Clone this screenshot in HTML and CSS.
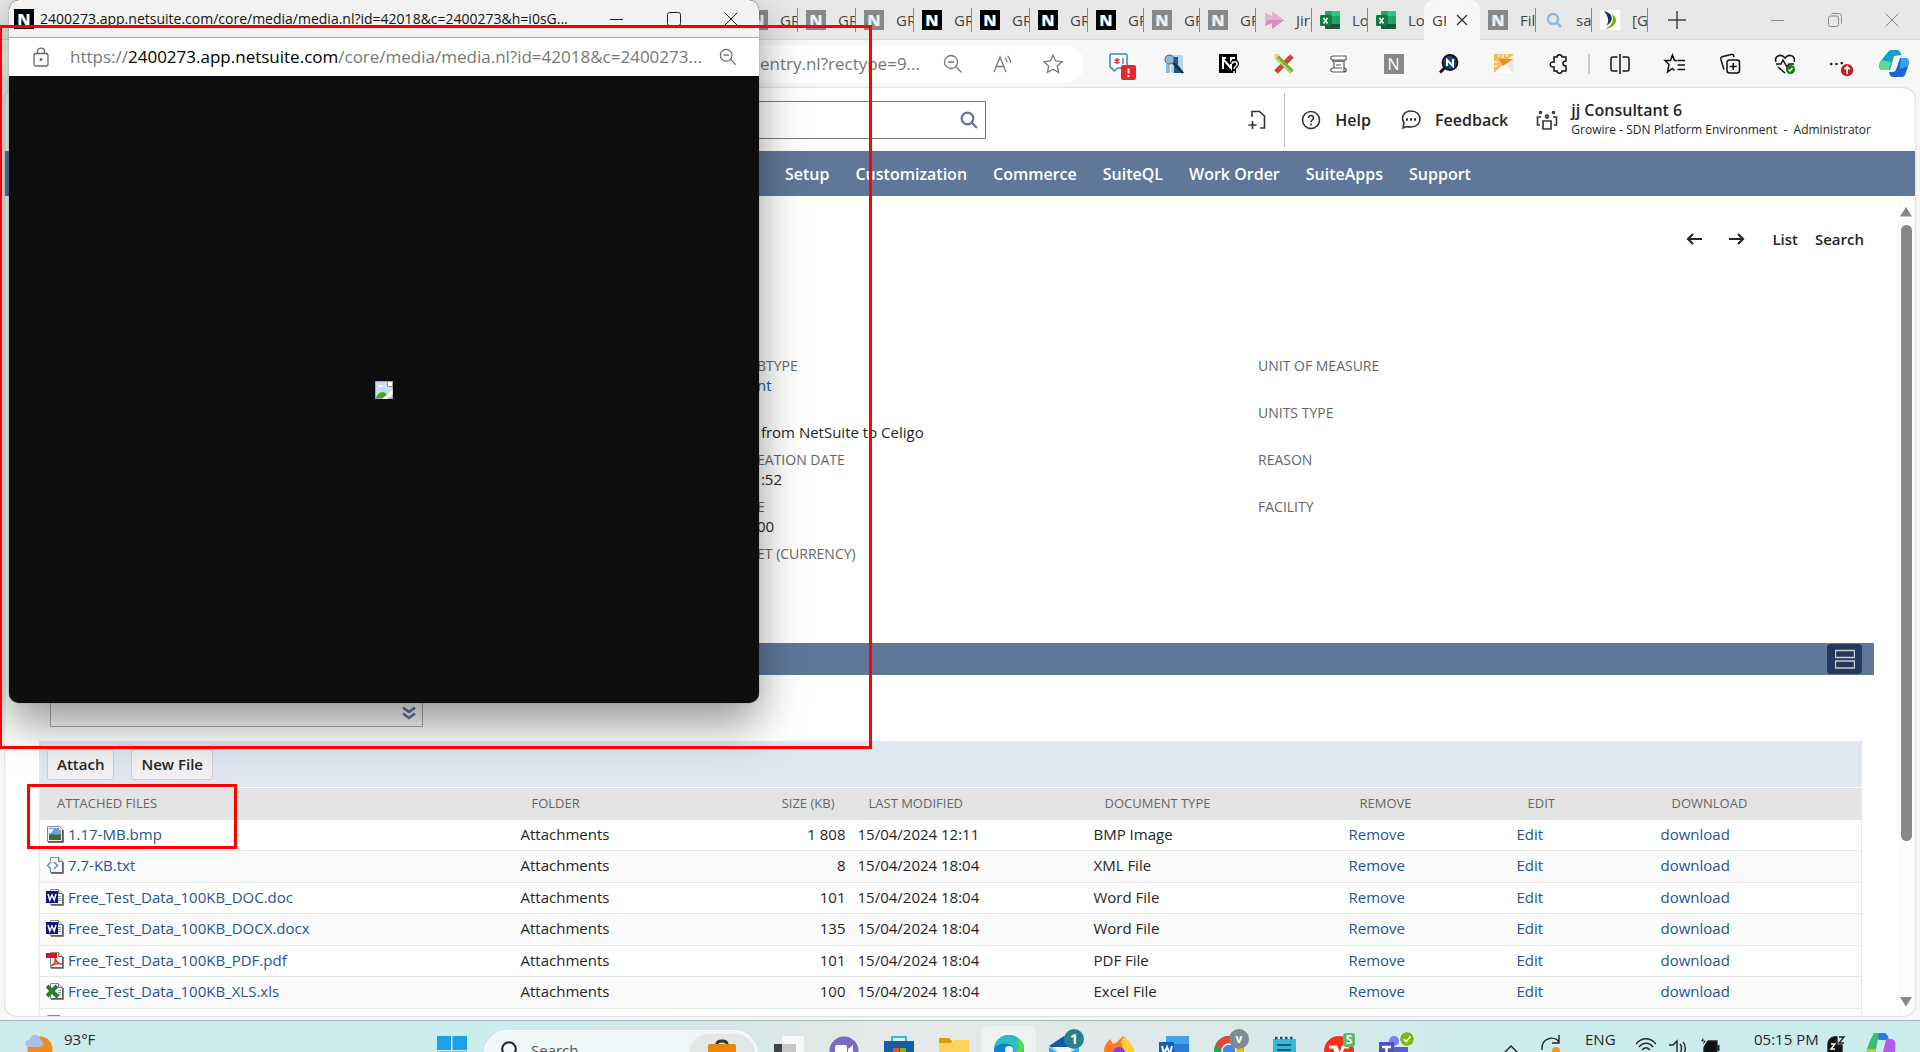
FILE: index.html
```html
<!DOCTYPE html>
<html lang="en">
<head>
<meta charset="utf-8">
<title>NetSuite record - attached files</title>
<link rel="stylesheet" href="styles.css">
</head>
<body>
<svg class="defs" aria-hidden="true">
  <defs>
    <symbol id="zoom-out" viewBox="0 0 20 20"><circle cx="8" cy="8" r="6.5"/><path d="M12.800 12.800 18.500 18.500M5 8h6"/></symbol>
    <symbol id="excel" viewBox="0 0 20 20"><path fill="#21a366" d="M6 1h13a1 1 0 0 1 1 1v16a1 1 0 0 1-1 1H6a1 1 0 0 1-1-1V2a1 1 0 0 1 1-1z"/><path fill="#107c41" d="M5 6h7v9H5z"/><path fill="#185c37" d="M5 14h15v4a1 1 0 0 1-1 1H6a1 1 0 0 1-1-1z"/><path fill="#33c481" d="M12 1h7a1 1 0 0 1 1 1v4h-8z"/><rect x="0" y="5" width="11" height="11" rx="1" fill="#107c41"/><path stroke="#fff" stroke-width="1.600" d="M3.500 8 7.500 13.500M7.500 8 3.500 13.500"/></symbol>
    <symbol id="page" viewBox="0 0 18 18"><path fill="#f4f4f4" stroke="#8a8a8a" d="M4.500 1.500h8l4 4v11h-12z"/><path fill="#ddd" stroke="#777" d="M12.500 1.500v4h4"/><path stroke="#555" stroke-width="1.500" d="M5 17h12V6"/></symbol>
    <symbol id="word" viewBox="0 0 18 18"><use href="#page"/><path stroke="#999" d="M12 8.500h3M12 10.500h3M12 12.500h3"/><rect x="0" y="3" width="12" height="12" fill="#10128c"/><path fill="none" stroke="#fff" stroke-width="1.500" d="M2 6l1.800 6L6 7l2.200 5L10 6"/></symbol>
    <symbol id="photo" viewBox="0 0 18 18"><path fill="#e8eef6" stroke="#888" d="M1.500 1.500h12l3 3v12h-15z"/><path fill="#6f9fd6" d="M3 3h10v2h2v5H3z"/><path fill="#e8f1fb" d="M3 4h5l-3 4H3z"/><path fill="#3c6e35" d="M3 10l4-1 3 1 5-1v6H3z"/><path stroke="#444" stroke-width="1.500" d="M2 17h15V5"/></symbol>
  </defs>
</svg>

<div class="browser">
  <header class="tabstrip">
    <div class="tabs tabs-wide">
      <div class="tab"><span class="fav n dim">N</span><span class="tab-name">GR</span></div>
      <div class="tab"><span class="fav n dim">N</span><span class="tab-name">GR</span></div>
      <div class="tab"><span class="fav n dim">N</span><span class="tab-name">GR</span></div>
      <div class="tab"><span class="fav n">N</span><span class="tab-name">GR</span></div>
      <div class="tab"><span class="fav n">N</span><span class="tab-name">GR</span></div>
      <div class="tab"><span class="fav n">N</span><span class="tab-name">GR</span></div>
    </div>
    <div class="tabs">
      <div class="tab"><span class="fav n">N</span><span class="tab-name">GR</span></div>
      <div class="tab"><span class="fav n dim">N</span><span class="tab-name">GR</span></div>
      <div class="tab"><span class="fav n dim">N</span><span class="tab-name">GR</span></div>
      <div class="tab"><svg class="fav" viewBox="0 0 20 20"><path fill="#eab0d2" d="M1 3l7 3V1l12 9-12 9v-6l-7 3z"/><path fill="#d68fbd" d="M3 10h17L8 19v-6l-7 3z"/></svg><span class="tab-name">Jira</span></div>
      <div class="tab"><svg class="fav"><use href="#excel"/></svg><span class="tab-name">Log</span></div>
      <div class="tab last"><svg class="fav"><use href="#excel"/></svg><span class="tab-name">Log</span></div>
      <div class="tab active"><span class="tab-name">GR</span><button class="tab-close" aria-label="Close tab"><svg viewBox="0 0 12 12"><path d="M1 1l10 10M11 1 1 11"/></svg></button></div>
      <div class="tab"><span class="fav n dim">N</span><span class="tab-name">File</span></div>
      <div class="tab"><svg class="fav" viewBox="0 0 20 20" fill="none" stroke="#8fb9e0" stroke-width="2.500"><circle cx="9" cy="9" r="5"/><path d="M12.500 12.500 17 17"/></svg><span class="tab-name">sa</span></div>
      <div class="tab"><svg class="fav" viewBox="0 0 20 20"><path fill="#fff" d="M0 0h20v20H0z"/><path fill="#12394d" d="M4 1c9 2 11 10 2 15 4-5 2-10-2-15z"/><path fill="#7ea800" d="M12 4c8 6 3 14-7 15 8-4 9-9 7-15z"/></svg><span class="tab-name">[GR</span></div>
    </div>
    <button class="new-tab" aria-label="New tab"><svg viewBox="0 0 18 18"><path d="M9 0v18M0 9h18"/></svg></button>
    <div class="win-buttons">
      <button aria-label="Minimize"><svg viewBox="0 0 14 14"><path d="M0 7.500h13"/></svg></button>
      <button aria-label="Restore"><svg viewBox="0 0 14 14"><rect x=".5" y="3" width="10" height="10.500" rx="2"/><path d="M3.500 .5h7a3 3 0 0 1 3 3v7"/></svg></button>
      <button aria-label="Close"><svg viewBox="0 0 14 14"><path d="M.5 .5l13 13M13.500 .5l-13 13"/></svg></button>
    </div>
  </header>

  <div class="toolbar">
    <div class="omnibox">
      <span class="address">dentry.nl?rectype=9...</span>
      <button aria-label="Zoom out"><svg class="line"><use href="#zoom-out"/></svg></button>
      <button aria-label="Read aloud"><svg class="line" viewBox="0 0 20 20"><path d="M1 18 7 3l6 15M3.500 12.500h7M12 4c1.500 1 2 2.500 2 4M14.500 2c2.500 2 3 4 3 7"/></svg></button>
      <button aria-label="Favourite"><svg class="line" viewBox="0 0 20 20"><path d="M10 1l2.700 6 6.300.700-4.700 4.300 1.300 6.500-5.600-3.200-5.600 3.200 1.300-6.500L1 7.700 7.300 7z"/></svg></button>
    </div>
    <div class="extensions">
      <button aria-label="Comments"><svg viewBox="0 0 28 28"><path fill="#fff" stroke="#3b82c4" stroke-width="1.500" d="M2 1h15a1 1 0 0 1 1 1v13H9l-4 3-2-3H2a1 1 0 0 1-1-1V2a1 1 0 0 1 1-1z"/><path stroke="#d22" stroke-width="1.400" d="M8 5v6M5.500 6.500l5 3M10.500 6.500l-5 3"/><path stroke="#3b82c4" stroke-width="1.400" d="M14 5v6"/><rect x="12" y="12" width="15" height="15" rx="2" fill="#e8262b"/><path stroke="#fff" stroke-width="2" d="M19.500 15.500v5M19.500 22v2"/></svg></button>
      <button aria-label="Record search"><svg viewBox="0 0 20 20"><path fill="#b8d3e8" d="M7 1h12v18H7z"/><path fill="#17598c" d="M10 3h4v8l6 8H10z"/><path fill="#8db9da" d="M2 10h4v9H2z"/><circle cx="5.500" cy="5.500" r="4.500" fill="#8db9da" stroke="#556" /><path stroke="#223" stroke-width="2" d="M9 9l10 10"/></svg></button>
      <button aria-label="Field help"><svg viewBox="0 0 20 20"><path fill="#000" d="M0 0h18v14h-4v5H0z"/><path stroke="#fff" stroke-width="2" fill="none" d="M4 15V5l8 9V4M3 4h4M11 4h5"/><path stroke="#000" stroke-width="4" fill="none" d="M13 10c0-3 5-3 5 0s-3 2-3 5v4"/><path stroke="#fff" stroke-width="1.500" fill="none" d="M13 10c0-3 5-3 5 0s-3 2-3 5M15 17v2"/></svg></button>
      <button aria-label="Editor"><svg viewBox="0 0 20 20"><path stroke="#c44a35" stroke-width="5" d="M18 2 2 18"/><path stroke="#7fae38" stroke-width="5" d="M3 3l15 15"/><path stroke="#bfd857" stroke-width="2" d="M2 4l15 15"/><path fill="#f0cd94" d="M0 0h6L1 5z"/></svg></button>
      <button aria-label="Script"><svg viewBox="0 0 20 20"><path fill="#fff" d="M0 0h20v20H0z"/><path fill="none" stroke="#555" stroke-width="1.200" d="M4 2h13v4h-2v12H4c-3 0-3-4 0-4h9M4 2c-3 0-3 4 0 4h10M5 8v6M4 18h11c3 0 3-4 0-4M7 11h5"/><path stroke="#777" stroke-width="2" d="M3 7h12"/></svg></button>
      <button aria-label="NetSuite"><span class="fav n thin">N</span></button>
      <button aria-label="Finder"><svg viewBox="0 0 20 20"><circle cx="11" cy="8.500" r="7.500" fill="#16457a" stroke="#111" stroke-width="1.800"/><path stroke="#fff" stroke-width="2" fill="none" d="M8 12V6l6 6V5"/><path stroke="#111" stroke-width="3" d="M5.500 14 1 18.500"/></svg></button>
      <button aria-label="Ruler"><svg viewBox="0 0 20 20"><path fill="#e9e9e9" d="M0 19 20 2v17z"/><path fill="#fff" d="M0 19l10-9 9 9z"/><path fill="#fbb95c" d="M0 0h20L0 19z"/><path fill="#f08b22" d="M5 5h14L9 12z"/><path stroke="#fff" d="M5 0v3M9 0v4M13 0v3M0 8h3M0 12h4"/></svg></button>
      <button aria-label="Extensions"><svg class="bold" viewBox="0 0 20 20"><path d="M5 3h3c0-3 5-3 5 0h4v4c-4 0-4 5 0 5v5h-4c0 3-5 3-5 0H5v-4c-5 1-5-6 0-5z"/></svg></button>
      <span class="rule"></span>
      <button aria-label="Split screen"><svg class="bold" viewBox="0 0 20 20"><path d="M7.500 3H3a2 2 0 0 0-2 2v10a2 2 0 0 0 2 2h4.500M12.500 3H17a2 2 0 0 1 2 2v10a2 2 0 0 1-2 2h-4.500M10 0v20"/></svg></button>
      <button aria-label="Favourites"><svg class="bold" viewBox="0 0 20 20"><path d="M12 6.500H9.500L7.500 1l-2 5.500H0l4 4L2.500 18l5-3.500 2 2M12.500 6.500H20M12.500 11H20M12.500 15.500H20"/></svg></button>
      <button aria-label="Collections"><svg class="bold" viewBox="0 0 20 20"><rect x="7" y="6" width="12.500" height="13" rx="2.500"/><path d="M4 15.500 1 6c-.5-2 0-3 2-3.500L11 .5c2-.5 2.500 0 3 2.500M13.200 9v7M9.700 12.500h7"/></svg></button>
      <button aria-label="Browser essentials"><svg class="bold" viewBox="0 0 20 20"><path d="M1 8C-1 2 6-1 10 4c4-5 11-2 9 4M1 10h5l2-4 4 7 2-3h5M3 13l7 6"/><circle cx="15.500" cy="15.500" r="4.500" fill="#107c10" stroke="none"/><path stroke="#fff" d="M13.500 15.500l1.500 1.500 2.500-3"/></svg></button>
      <button aria-label="Settings"><svg class="wide" viewBox="0 0 34 28"><circle cx="7" cy="14" r="1.500"/><circle cx="13" cy="14" r="1.500"/><circle cx="19" cy="13" r="1.500"/><circle cx="25" cy="21" r="7" fill="#c4201f"/><path stroke="#fff" stroke-width="1.800" fill="none" d="M25 25.500v-8M22 20l3-3 3 3"/></svg></button>
      <button aria-label="Copilot"><svg class="wide" viewBox="0 0 30 28"><path fill="#14a0c8" d="M9 2c1-2 3-2 5-2h4c3 0 3 3 5 5l-8 1-4 14H4c-5 0-4-5-3-8z"/><path fill="#5fd8a0" d="M2 10l10 2-2 8H4c-4 0-4-4-2-10z"/><path fill="#1567d8" d="M21 8h5c5 0 4 5 3 9l-3 8c-1 2-3 2-5 2h-6c-4 0-4-2-5-5h4c2 0 3-2 4-5z"/><path fill="#30a7f2" d="M22 8h4c5 0 4 4 3 8l-8 3z"/></svg></button>
    </div>
  </div>

  <main class="page">
    <div class="ns-head">
      <div class="ns-search"><input type="text" aria-label="Search NetSuite"><svg viewBox="0 0 18 18"><circle cx="7.500" cy="7.500" r="5.800"/><path d="M11.500 11.500 17 17"/></svg></div>
      <button class="quick" aria-label="Create new"><svg viewBox="0 0 18 20"><path d="M4 7V1.500h7.500L16.500 6v12H12M4.500 11v8M.5 15h8"/></svg></button>
      <a class="head-link" href="#"><svg viewBox="0 0 20 20"><circle cx="10" cy="10" r="8.500"/><path d="M7.500 8c0-3.500 5-3 5 0 0 2-2.500 2-2.500 4M10 13.500v2"/></svg>Help</a>
      <a class="head-link" href="#"><svg viewBox="0 0 20 20"><path d="M2 18l1-5C-1 6 4 1 10 1c12 0 12 16 0 16-2 0-3 0-4-.5z"/><path stroke-width="2.400" d="M5 9.500h2M9 9.500h2M13 9.500h2"/></svg>Feedback</a>
      <div class="role"><svg viewBox="0 0 22 20"><path d="M5 7H1.500v8H4M17 7h3.500v8H18M7 11h8v8H7z"/><circle cx="4.500" cy="2.500" r="1"/><circle cx="17.500" cy="2.500" r="1"/><circle cx="11" cy="6.500" r="1.400"/></svg><div><p class="user">jj Consultant 6</p><p class="account">Growire - SDN Platform Environment&nbsp; - &nbsp;Administrator</p></div></div>
    </div>
    <nav class="ns-nav"><a href="#">Setup</a><a href="#">Customization</a><a href="#">Commerce</a><a href="#">SuiteQL</a><a href="#">Work Order</a><a href="#">SuiteApps</a><a href="#">Support</a></nav>

    <div class="scroll">
      <div class="record">
        <div class="record-nav">
          <a href="#" aria-label="Previous"><svg viewBox="0 0 16 12"><path d="M16 6H2M7 1 2 6l5 5"/></svg></a>
          <a href="#" aria-label="Next"><svg viewBox="0 0 16 12"><path d="M0 6h14M9 1l5 5-5 5"/></svg></a>
          <a href="#">List</a><a href="#">Search</a>
        </div>
        <div class="fields">
          <dl>
            <div><dt>BTYPE</dt><dd><a href="#">nt</a></dd></div>
            <div><dt></dt><dd>&nbsp;from NetSuite to Celigo</dd></div>
            <div><dt>EATION DATE</dt><dd>&nbsp;:52</dd></div>
            <div><dt>E</dt><dd>00</dd></div>
            <div><dt>ET (CURRENCY)</dt><dd></dd></div>
          </dl>
          <dl>
            <div><dt>UNIT OF MEASURE</dt><dd></dd></div>
            <div><dt>UNITS TYPE</dt><dd></dd></div>
            <div><dt>REASON</dt><dd></dd></div>
            <div><dt>FACILITY</dt><dd></dd></div>
          </dl>
        </div>
        <div class="subtabs"><button aria-label="Toggle layout"><svg viewBox="0 0 20 20"><path d="M.5 1.500h19v7H.5zM.5 12h19v7H.5z"/></svg></button></div>
        <div class="attach">
          <div class="picker"><input type="text" aria-label="File to attach"><svg viewBox="0 0 14 14"><path d="M1 1.500l6 4.500 6-4.500M1 7.500l6 4.500 6-4.500"/></svg></div>
          <div class="actions"><button>Attach</button><button>New File</button></div>
          <table>
            <colgroup><col class="c-file"><col class="c-folder"><col class="c-date"><col class="c-type"><col class="c-remove"><col class="c-edit"><col></colgroup>
            <thead><tr><th>ATTACHED FILES</th><th><span class="split"><span>FOLDER</span><span>SIZE (KB)</span></span></th><th>LAST MODIFIED</th><th>DOCUMENT TYPE</th><th>REMOVE</th><th>EDIT</th><th>DOWNLOAD</th></tr></thead>
            <tbody>
              <tr><td><a href="#"><svg><use href="#photo"/></svg>1.17-MB.bmp</a></td><td><span class="split"><span>Attachments</span><span>1 808</span></span></td><td>15/04/2024 12:11</td><td>BMP Image</td><td><a href="#">Remove</a></td><td><a href="#">Edit</a></td><td><a href="#">download</a></td></tr>
              <tr><td><a href="#"><svg viewBox="0 0 18 18"><use href="#page"/><path fill="#fff" d="M1 5h11v8H1z"/><path fill="none" stroke="#5d8fc7" stroke-width="1.500" d="M5 6 1.500 9.500 5 13M8 6l3.500 3.500L8 13"/></svg>7.7-KB.txt</a></td><td><span class="split"><span>Attachments</span><span>8</span></span></td><td>15/04/2024 18:04</td><td>XML File</td><td><a href="#">Remove</a></td><td><a href="#">Edit</a></td><td><a href="#">download</a></td></tr>
              <tr><td><a href="#"><svg><use href="#word"/></svg>Free_Test_Data_100KB_DOC.doc</a></td><td><span class="split"><span>Attachments</span><span>101</span></span></td><td>15/04/2024 18:04</td><td>Word File</td><td><a href="#">Remove</a></td><td><a href="#">Edit</a></td><td><a href="#">download</a></td></tr>
              <tr><td><a href="#"><svg><use href="#word"/></svg>Free_Test_Data_100KB_DOCX.docx</a></td><td><span class="split"><span>Attachments</span><span>135</span></span></td><td>15/04/2024 18:04</td><td>Word File</td><td><a href="#">Remove</a></td><td><a href="#">Edit</a></td><td><a href="#">download</a></td></tr>
              <tr><td><a href="#"><svg viewBox="0 0 18 18"><use href="#page"/><path fill="#d8141c" d="M0 2h11v5H0z"/><path fill="none" stroke="#e0353b" stroke-width="1.500" d="M5 15c4-2 5-5 4-8 1 4 3 6 7 6-4-1-8 0-11 2z"/></svg>Free_Test_Data_100KB_PDF.pdf</a></td><td><span class="split"><span>Attachments</span><span>101</span></span></td><td>15/04/2024 18:04</td><td>PDF File</td><td><a href="#">Remove</a></td><td><a href="#">Edit</a></td><td><a href="#">download</a></td></tr>
              <tr><td><a href="#"><svg viewBox="0 0 18 18"><use href="#page"/><path stroke="#999" d="M12 8.500h3M12 10.500h3M12 12.500h3"/><path stroke="#2c7d32" stroke-width="4" d="M1 4l11 11M11 4 1 14"/></svg>Free_Test_Data_100KB_XLS.xls</a></td><td><span class="split"><span>Attachments</span><span>100</span></span></td><td>15/04/2024 18:04</td><td>Excel File</td><td><a href="#">Remove</a></td><td><a href="#">Edit</a></td><td><a href="#">download</a></td></tr>
              <tr><td><a href="#" aria-label="Image file"><svg><use href="#photo"/></svg></a></td><td>Attachments</td><td></td><td></td><td><a href="#">Remove</a></td><td><a href="#">Edit</a></td><td><a href="#">download</a></td></tr>
            </tbody>
          </table>
        </div>
      </div>
      <div class="scrollbar"><svg viewBox="0 0 12 10"><path d="M6 0l6 9.500H0z"/></svg><span class="thumb"></span><span class="track"></span><svg viewBox="0 0 12 10"><path d="M0 0h12L6 9.500z"/></svg></div>
    </div>
  </main>
</div>

<footer class="taskbar">
  <div class="weather"><svg viewBox="0 0 28 28"><circle cx="15" cy="14" r="12.500" fill="#f58a1d"/><path fill="#a9c0ee" d="M4 12c-5 0-5-7 0-7 2-7 11-6 11 0 4 0 4 7 0 7z"/><path fill="#a9c0ee" d="M18 22c0-6 8-6 9 0z"/></svg><span>93°F</span></div>
  <div class="apps">
    <button class="start" aria-label="Start"><svg viewBox="0 0 30 30"><path fill="#1e9fe8" d="M0 0h14v14H0zM15.500 0H30v14H15.500zM0 15.500h14V30H0zM15.500 15.500H30V30H15.500z"/></svg></button>
    <div class="tb-search"><svg viewBox="0 0 18 18"><circle cx="9" cy="8" r="6.800"/><path d="M5 13 1 18"/></svg><span>Search</span><i><svg viewBox="0 0 30 28"><path fill="none" stroke="#333" stroke-width="3" d="M10 5c0-4 10-4 10 0"/><rect x="1" y="5" width="28" height="22" rx="2" fill="#e8850c"/><path fill="#b35c06" d="M1 18h28v9H1z"/><path fill="#ffd54a" d="M13 15h4v6h-4z"/></svg></i></div>
    <button aria-label="Task view"><svg viewBox="0 0 30 30"><path fill="#444" d="M0 8h22v22H0z"/><path fill="#fff" opacity=".7" d="M8 0h22v26H8z"/></svg></button>
    <button aria-label="Chat"><svg viewBox="0 0 30 30"><circle cx="15" cy="15" r="14.500" fill="#7b69c4"/><rect x="6" y="9" width="12" height="12" rx="2" fill="#fff"/><path fill="#fff" d="M19 13l5-4v12l-5-4z"/></svg></button>
    <button aria-label="Store"><svg viewBox="0 0 30 30"><path fill="none" stroke="#2ab8ee" stroke-width="2" d="M8 6V1h14v5"/><path fill="#0f5fa9" d="M0 5h30v25H0z"/><path fill="#f05023" d="M9 12h6v6H9z"/><path fill="#7fba00" d="M16 12h6v6h-6z"/></svg></button>
    <button aria-label="Explorer"><svg viewBox="0 0 30 30"><path fill="#dc9b0c" d="M0 2h10l3 3v6H0z"/><path fill="#ffd25a" d="M0 7h12l3-3h15v26H0z"/></svg></button>
    <button class="on" aria-label="Edge"><svg viewBox="0 0 30 30"><circle cx="15" cy="15" r="15" fill="#1380ce"/><path fill="#2cbfbf" d="M0 13C2-4 28-5 30 14c-1 5-8 7-11 4C22 8 8 5 0 13z"/><path fill="#5ad653" d="M22 2c7 3 9 9 8 13-1 3-5 5-9 4 4-5 5-12 1-17z"/><circle cx="15" cy="15" r="4" fill="#e8f4fa"/></svg></button>
    <button aria-label="Mail"><svg viewBox="0 0 30 30"><path fill="#0f5cae" d="M0 10 15 0l15 10-15 8z"/><path fill="#f4f6fa" d="M3 11h24l-12 9z"/><path fill="#2fb2ec" d="M0 11l15 9 15-9v19H0z"/></svg><b class="badge">1</b></button>
    <button aria-label="Firefox"><svg viewBox="0 0 30 30"><path fill="#ff7a26" d="M0 16C0 8 4 6 6 3l3 5 4-2 6-6c2 5 9 7 11 15v15H0z"/><path fill="#ffcf33" d="M17 7c0-3 2-5 4-7 1 5 9 6 9 17l-4 9z"/><circle cx="15" cy="17" r="6" fill="#7b3fe4"/></svg></button>
    <button aria-label="Word"><svg viewBox="0 0 30 30"><path fill="#41a5ee" d="M7 0h23v8H7z"/><path fill="#2b7cd3" d="M7 8h23v8H7z"/><path fill="#185abd" d="M0 6h15v17H0z"/><path fill="none" stroke="#fff" stroke-width="2" d="M3 10l2 8 3-7 3 7 2-8"/></svg></button>
    <button aria-label="Chrome"><svg viewBox="0 0 30 30"><circle cx="15" cy="15" r="15" fill="#2da04e"/><path fill="#ea4335" d="M2 8C8-3 23-3 28 8H15c-5 0-7 4-6 8z"/><path fill="#fbbc04" d="M15 8h13c5 10-2 22-13 22z"/><circle cx="15" cy="15" r="7" fill="#4285f4" stroke="#fff" stroke-width="1.500"/></svg><b class="badge grey">v</b></button>
    <button aria-label="Notepad"><svg viewBox="0 0 30 30"><path fill="#39b7d6" d="M4 3h23v27H4z"/><path stroke="#164d66" stroke-width="2.500" stroke-dasharray="2.500 2.500" d="M6 2h20"/><path stroke="#0a5f7d" stroke-width="2" d="M8 9h14M8 14h14"/></svg></button>
    <button aria-label="WPS"><svg viewBox="0 0 30 30"><circle cx="15" cy="15" r="15" fill="#f5301d"/><path fill="none" stroke="#fff" stroke-width="3" d="M5 11h7l4 9 3-9h6M10 11l4 9"/></svg><b class="badge green">S</b></button>
    <button aria-label="Teams"><svg viewBox="0 0 30 30"><circle cx="15" cy="5" r="5" fill="#7b83eb"/><path fill="#5b5fc7" d="M8 11h21v19H8z"/><path fill="#4b53bc" d="M0 6h15v18H0z"/><path stroke="#fff" stroke-width="2.500" d="M3 11h9M7.500 11v9"/></svg><b class="badge lime"><svg viewBox="0 0 12 12"><path d="M2 6l3 3 5-6"/></svg></b></button>
  </div>
  <div class="tray">
    <svg viewBox="0 0 20 20"><path d="M4 17l6-6 6 6"/></svg>
    <svg viewBox="0 0 20 20"><path d="M1 15C0 3 13 0 18 7M18 0v8h-7"/><circle cx="15" cy="16" r="4" fill="#f39a1c" stroke="none"/></svg>
    <span class="lang">ENG</span>
    <svg viewBox="0 0 20 20"><path d="M0 9c6-7 14-7 20 0M3 12c4-5 10-5 14 0M6 15c3-3 5-3 8 0"/></svg>
    <svg viewBox="0 0 20 20"><path d="M1 10h4l4-4v14M12 9c2 2 2 6 0 9M15 7c3 3 3 9 0 13"/></svg>
    <svg viewBox="0 0 20 20"><path d="M4 6h13v13H4z" fill="#111"/><path stroke-width="2" d="M18.500 10v6"/><path fill="#111" stroke="#cbebed" d="M4 0 0 7h3l-1 6 5-8H4z"/></svg>
    <span class="clock">05:15 PM</span>
    <svg viewBox="0 0 20 20"><path fill="#111" d="M2 20V9c0-5 5-8 9-7v8h5v10z"/><path d="M13 2h5l-5 6h5"/><path stroke="#fff" d="M5 9h4l-4 5h4"/></svg>
    <svg class="pilot" viewBox="0 0 30 30"><path fill="#1d7fe0" d="M8 2h10c3 0 4 3 5 7H13z"/><path fill="#3bbf6a" d="M8 2h5L9 24H3c-4-2-3-7 5-22z"/><path fill="#f0b429" d="M1 18h9l-2 12H2z"/><path fill="#b05ee6" d="M20 8h5c5 0 6 6 2 22H15z"/></svg>
  </div>
</footer>

<section class="popup" aria-label="Media window">
  <div class="popup-title"><span class="fav n">N</span><p>2400273.app.netsuite.com/core/media/media.nl?id=42018&amp;c=2400273&amp;h=i0sG...</p>
    <button aria-label="Minimize"><svg viewBox="0 0 14 14"><path d="M0 7.500h13"/></svg></button>
    <button aria-label="Maximize"><svg viewBox="0 0 14 14"><rect x=".5" y=".5" width="13" height="13" rx="2"/></svg></button>
    <button aria-label="Close"><svg viewBox="0 0 14 14"><path d="M.5 .5l13 13M13.500 .5l-13 13"/></svg></button>
  </div>
  <div class="popup-url"><svg viewBox="0 0 16 20"><rect x="1" y="6.500" width="14" height="12.500" rx="2"/><path d="M4.500 6.500V4.500c0-4.500 7-4.500 7 0v2"/><circle cx="8" cy="12.500" r=".8"/></svg><p>https://<span>2400273.app.netsuite.com</span>/core/media/media.nl?id=42018&amp;c=2400273...</p><svg class="mag"><use href="#zoom-out"/></svg></div>
  <div class="popup-body"><svg viewBox="0 0 18 18" role="img" aria-label="Broken image"><path fill="#c8dbf7" stroke="#aaa" d="M.5 .5h17v17H.5z"/><path fill="#fff" stroke="#999" d="M12.500 .5v5h5V.5z"/><path fill="#fff" d="M3 6c0-2 2-2 2.500-2 2 0 3 1 3 2z"/><path fill="#47a531" d="M1 17c2-7 9-8 11-3l-4 3z"/><path fill="#fff" d="M17.500 9v4L12 18H7z"/></svg></div>
</section>
<div class="mark mark-window"></div>
<div class="mark mark-file"></div>
</body>
</html>
```
FILE: styles.css
```css
* { box-sizing: border-box; }
body {
  position: relative;
  display: flex;
  flex-direction: column;
  height: 100vh;
  margin: 0;
  overflow: hidden;
  background: #f7f7f7;
  color: #262626;
  font: 15px/20px "Open Sans", "Noto Sans", sans-serif;
}
p, dl, dd { margin: 0; }
a { color: #255599; text-decoration: none; }
button { padding: 0; border: 0; background: none; color: inherit; font: inherit; }
svg { display: block; flex: none; fill: none; }
.defs { position: absolute; width: 0; height: 0; }

.browser { display: flex; flex: 1; flex-direction: column; min-height: 0; padding-bottom: 4px; }

.tabstrip { display: flex; height: 40px; padding-left: 740px; border-bottom: 1px solid #dadada; background: #e8e8e8; }
.tabs { display: flex; }
.tab { display: flex; align-items: center; gap: 12px; width: 56px; height: 39px; padding-left: 8px; overflow: hidden; position: relative; }
.tabs-wide .tab { width: 58px; }
.tab::after { position: absolute; right: 0; top: 8px; width: 1px; height: 24px; background: #888; content: ""; }
.tab.active::after, .tab.last::after { display: none; }
.tab.active { gap: 10px; height: 40px; padding: 0 8px; border-radius: 10px 10px 0 0; background: #f7f7f7; }
.tab.active .tab-name { width: 14px; overflow: hidden; }
.tab-name { color: #444; font-size: 15px; white-space: nowrap; }
.tab-close svg { width: 12px; height: 12px; stroke: #333; stroke-width: 1.300; }
.fav { flex: none; width: 20px; height: 20px; }
.n { background: #000; color: #fff; font: 800 16px/20px "Open Sans", sans-serif; text-align: center; }
.n.dim { background: #888; color: #eee; }
.n.thin { background: #888; font-weight: 400; }
.new-tab { width: 58px; }
.new-tab svg { width: 18px; height: 18px; margin: 0 auto; stroke: #444; stroke-width: 1.500; }
.win-buttons { display: flex; margin-left: auto; }
.win-buttons button { width: 57px; }
.win-buttons svg { width: 14px; height: 14px; margin: 0 auto; stroke: #8a8a8a; }

.toolbar { display: flex; align-items: center; height: 48px; }
.omnibox { display: flex; flex: 1; align-items: center; height: 38px; padding-right: 6px; border-radius: 19px; background: #fff; }
.address { margin-left: auto; padding-right: 8px; color: #777; font-size: 17px; }
.omnibox button { width: 50px; }
.line { width: 20px; height: 20px; margin: 0 auto; stroke: #777; stroke-width: 1.300; }
.extensions { display: flex; align-items: center; padding-left: 7px; }
.extensions button { display: grid; place-items: center; width: 55px; height: 48px; }
.extensions button:last-child { width: 53px; }
.extensions svg { width: 20px; height: 20px; }
.extensions button:first-child { padding: 6px 0 0 8px; }
.extensions button:first-child svg { width: 28px; height: 28px; }
.extensions .bold { overflow: visible; stroke: #111; stroke-width: 1.500; }
.extensions .wide { width: 30px; height: 28px; fill: #222; }
.rule { width: 2px; height: 20px; margin: 0 2px; background: #ccc; }

.page { display: flex; flex: 1; flex-direction: column; min-height: 0; margin: 0 5px; overflow: hidden; border-radius: 12px; background: #fff; box-shadow: 0 0 2px #aaa; }
.ns-head { display: flex; flex: none; align-items: center; height: 63px; padding-right: 44px; }
.ns-search { position: relative; display: flex; flex: none; align-items: center; justify-content: flex-end; width: 961px; height: 38px; margin-left: 20px; }
.ns-search input { width: 100%; height: 38px; padding: 0 36px 0 12px; border: 1px solid #777; background: #fff; }
.ns-search svg { position: absolute; right: 8px; width: 18px; height: 18px; stroke: #607799; stroke-width: 2.200; }
.quick { display: flex; align-items: center; justify-content: flex-end; height: 54px; margin-left: auto; padding-right: 18px; border-right: 1px solid #c4c4c4; }
.quick svg { width: 18px; height: 20px; stroke: #333; stroke-width: 1.600; }
.head-link { display: flex; align-items: center; gap: 14px; margin-left: 16px; padding-right: 14px; color: #262626; font-size: 16px; font-weight: 600; }
.head-link svg { width: 20px; height: 20px; stroke: #333; stroke-width: 1.600; }
.role { display: flex; align-items: center; gap: 13px; margin-left: 14px; }
.role svg { width: 22px; height: 20px; stroke: #333; stroke-width: 1.600; }
.user { font-size: 16px; font-weight: 600; }
.account { font-size: 12px; line-height: 20px; white-space: nowrap; }
.ns-nav { display: flex; flex: none; align-items: center; gap: 26px; height: 45px; padding-left: 780px; background: #607799; }
.ns-nav a { color: #fff; font-size: 16px; font-weight: 600; white-space: nowrap; }

.scroll { display: flex; flex: 1; min-height: 0; }
.record { flex: 1; min-width: 0; padding: 33px 23px 0 34px; overflow: hidden; }
.record-nav { display: flex; align-items: center; justify-content: flex-end; gap: 17px; height: 20px; padding-right: 10px; }
.record-nav a { color: #262626; font-weight: 600; }
.record-nav svg { width: 16px; height: 12px; margin-right: 10px; stroke: #262626; stroke-width: 2.200; }
.fields { display: grid; grid-template-columns: 501px 1fr; height: 287px; margin-top: 107px; padding-left: 718px; }
.fields dl > div { height: 47px; }
.fields dt { height: 19px; color: #666; font-size: 14px; line-height: 19px; }
.fields dd { height: 20px; }
.subtabs { display: flex; align-items: center; justify-content: flex-end; height: 32px; padding-right: 12px; background: #607799; }
.subtabs button { display: grid; place-items: center; width: 35px; height: 30px; border-radius: 4px; background: #24385e; }
.subtabs svg { width: 20px; height: 20px; stroke: #ccc; stroke-width: 1.400; }
.attach { margin-right: 12px; padding-top: 20px; }
.picker { position: relative; width: 373px; height: 32px; margin-left: 11px; }
.picker input { width: 100%; height: 32px; border: 1px solid #aaa; background: #fff; }
.picker svg { position: absolute; top: 11px; right: 7px; width: 14px; height: 14px; stroke: #607799; stroke-width: 2.500; }
.actions { display: flex; align-items: center; gap: 17px; height: 46px; margin-top: 14px; padding-left: 8px; background: #dfe6ef; }
.actions button { height: 31px; padding: 0 9px; border: 1px solid #ccc; border-radius: 3px; background: #f0f0f0; font-weight: 600; }
table { width: 100%; margin-top: 1px; border: 1px solid #e8e8e8; border-top: 0; border-collapse: collapse; table-layout: fixed; }
.c-file { width: 475px; }
.c-folder { width: 337px; }
.c-date { width: 236px; }
.c-type { width: 255px; }
.c-remove { width: 168px; }
.c-edit { width: 144px; }
th { height: 31px; padding: 0 17px; background: #e4e4e4; color: #666; font-size: 13px; font-weight: 400; text-align: left; }
td { height: 32px; padding: 0 6px 2px; border-top: 1px solid #e6e6e6; white-space: nowrap; }
tbody tr:nth-child(odd) td { height: 31px; }
tbody tr:nth-child(even) { background: #fafafa; }
td a { display: flex; align-items: center; gap: 4px; }
td svg { width: 18px; height: 18px; }
.split { display: flex; justify-content: space-between; }

.scrollbar { display: flex; flex-direction: column; align-items: center; flex: none; width: 18px; padding: 11px 0 9px; background: #fbfbfb; }
.scrollbar svg { width: 12px; height: 10px; fill: #888; }
.thumb { flex: 617 1 0; width: 11px; margin-top: 8px; border-radius: 6px; background: #888; }
.track { flex: 156 1 0; }

.taskbar { display: flex; flex: none; height: 32px; overflow: hidden; border-top: 1px solid #a3b4b6; background: linear-gradient(90deg, #cdeaec 0, #cbedee 24%, #d5e8e8 38%, #e6e9e7 46%, #dfe9e9 60%, #cbebed 80%, #cbebed 100%); }
.weather { display: flex; flex: none; align-items: flex-start; gap: 11px; width: 424px; padding-left: 25px; }
.weather svg { width: 28px; height: 28px; margin-top: 14px; }
.weather span, .lang, .clock { margin-top: 8px; font-size: 15px; line-height: 20px; }
.apps { display: flex; align-items: flex-start; flex: none; }
.apps > button { position: relative; display: flex; justify-content: center; width: 55px; height: 48px; margin-top: 5px; padding-top: 10px; }
.apps > button > svg { width: 30px; height: 30px; }
.apps > .on { border-radius: 6px; background: #eef2f1; }
.apps > .on svg { margin-top: -1px; }
.tb-search { display: flex; align-items: flex-start; width: 274px; height: 48px; margin: 9px 3px 0 5px; padding: 9px 2px 0 15px; border: 1px solid #fff; border-radius: 24px; background: #eef8f8; }
.tb-search > svg { width: 18px; height: 18px; margin-top: 1px; stroke: #222; stroke-width: 2; }
.tb-search span { padding-left: 13px; color: #555; }
.tb-search i { display: flex; justify-content: center; width: 66px; height: 40px; margin: -6px 0 0 auto; border-radius: 20px; background: #e2e6e5; }
.tb-search i svg { width: 30px; height: 28px; margin-top: 5px; }
.badge { position: absolute; top: 3px; left: 28px; width: 20px; height: 20px; border-radius: 10px; background: #27808c; color: #fff; font-size: 14px; line-height: 20px; text-align: center; }
.badge.grey { background: #7a8b93; font-size: 12px; }
.badge.green { top: 7px; left: 32px; width: 12px; height: 14px; border-radius: 3px; background: #5dbb63; font-size: 12px; line-height: 14px; }
.badge.lime { top: 6px; left: 34px; width: 14px; height: 14px; background: #7cb810; outline: 1px solid #eee; }
.badge.lime svg { width: 10px; height: 14px; margin: 0 auto; stroke: #fff; stroke-width: 2; }
.tray { display: flex; align-items: flex-start; flex: none; margin-left: auto; padding-right: 24px; }
.tray svg { width: 20px; height: 20px; margin-top: 14px; margin-right: 12px; stroke: #222; stroke-width: 1.400; }
.tray svg:nth-of-type(1) { margin-right: 20px; }
.tray svg:nth-of-type(2) { margin-right: 24px; }
.lang { width: 51px; }
.clock { width: 72px; margin-left: 22px; }
.tray svg:nth-of-type(6) { margin-right: 20px; }
.tray .pilot { width: 30px; height: 30px; margin-top: 10px; margin-right: 0; stroke: none; }

.popup { position: absolute; z-index: 1; top: 0; left: 9px; display: flex; flex-direction: column; width: 750px; height: 703px; overflow: hidden; border-radius: 10px; background: #0e0e0e; box-shadow: 0 0 1px #555, 0 20px 45px rgba(0, 0, 0, .42); }
.popup-title { display: flex; align-items: center; height: 38px; padding-left: 5px; background: #f2f2f2; border-bottom: 1px solid #aaa; }
.popup-title p { flex: 1; padding-left: 6px; color: #111; font-size: 14px; white-space: nowrap; }
.popup-title button { width: 57px; }
.popup-title svg { width: 14px; height: 14px; margin: 0 auto; stroke: #222; }
.popup-url { display: flex; align-items: center; height: 38px; padding: 0 22px 0 24px; background: #fff; color: #777; }
.popup-url svg { width: 16px; height: 20px; stroke: #666; stroke-width: 1.300; }
.popup-url .mag { width: 18px; height: 20px; }
.popup-url p { flex: 1; padding-left: 21px; font-size: 17px; white-space: nowrap; }
.popup-url p span { color: #000; }
.popup-body { display: grid; flex: 1; place-items: center; }
.popup-body svg { width: 18px; height: 18px; }

.mark { position: absolute; z-index: 2; border: 3px solid #f00; pointer-events: none; }
.mark-window { top: 25px; left: -1px; width: 873px; height: 724px; }
.mark-file { top: 784px; left: 27px; width: 210px; height: 65px; }
```
